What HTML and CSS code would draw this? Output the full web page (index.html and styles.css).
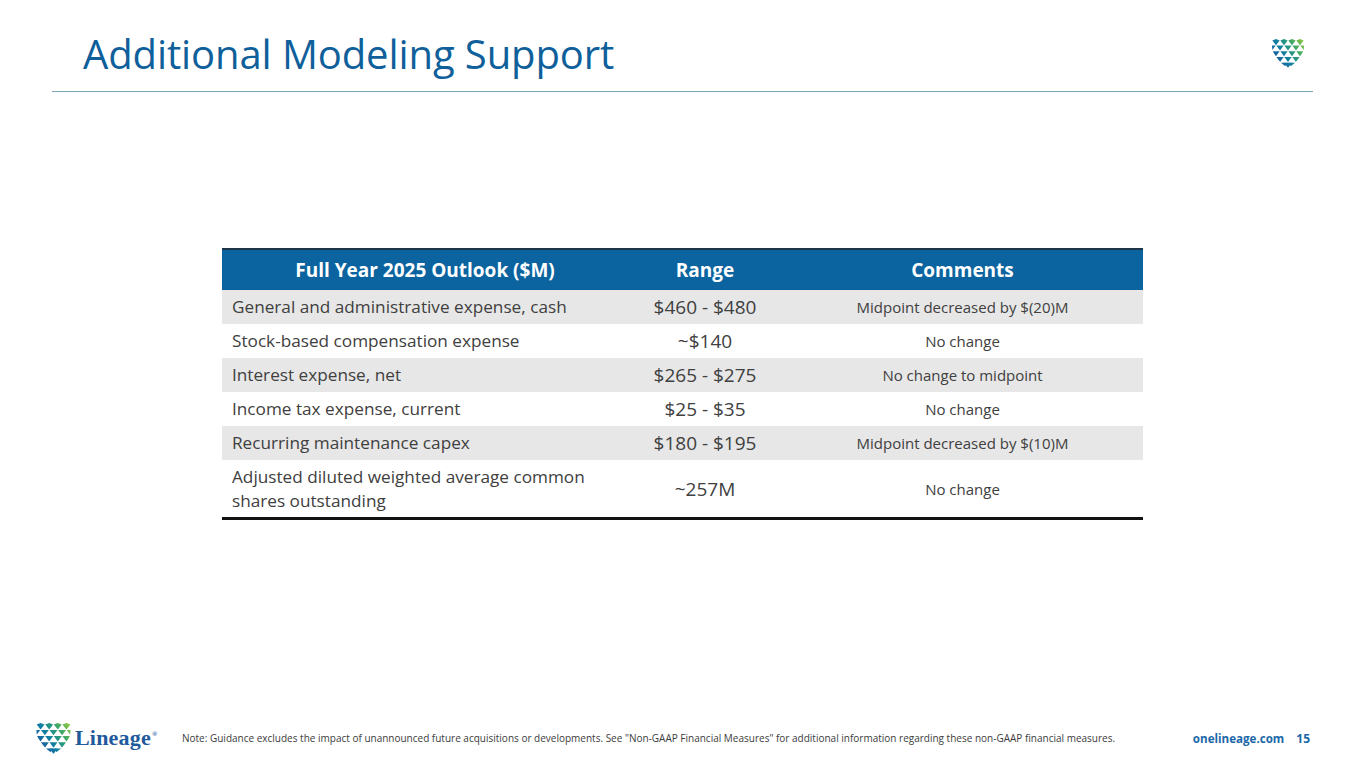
FILE: index.html
```html
<!DOCTYPE html>
<html>
<head>
<meta charset="utf-8">
<link rel="stylesheet" href="styles.css">
</head>
<body>
<svg class="defs" width="0" height="0" aria-hidden="true">
  <defs>
    <linearGradient id="lg" gradientUnits="userSpaceOnUse" x1="0" y1="30" x2="40" y2="4">
      <stop offset="0" stop-color="#1c4c9c"/>
      <stop offset="0.4" stop-color="#107ea3"/>
      <stop offset="0.68" stop-color="#30a171"/>
      <stop offset="1" stop-color="#8dc63f"/>
    </linearGradient>
    <clipPath id="shield">
      <path d="M0,0 L40,0 L40,9 C40,20 30,30 20,36 C10,30 0,20 0,9 Z"/>
    </clipPath>
    <symbol id="lineage-mark" viewBox="0 0 40 36">
      <g fill="url(#lg)" clip-path="url(#shield)">
        <polygon points="0.4,1.6 5,0 9.6,1.6 5,7.6"/>
        <polygon points="10.4,1.6 15,0 19.6,1.6 15,7.6"/>
        <polygon points="20.4,1.6 25,0 29.6,1.6 25,7.6"/>
        <polygon points="30.4,1.6 35,0 39.6,1.6 35,7.6"/>
        <polygon points="-4.6,8 4.6,8 0,14.2"/>
        <polygon points="5.4,8 14.6,8 10,14.2"/>
        <polygon points="15.4,8 24.6,8 20,14.2"/>
        <polygon points="25.4,8 34.6,8 30,14.2"/>
        <polygon points="35.4,8 44.6,8 40,14.2"/>
        <polygon points="0.4,15.2 9.6,15.2 5,21.4"/>
        <polygon points="10.4,15.2 19.6,15.2 15,21.4"/>
        <polygon points="20.4,15.2 29.6,15.2 25,21.4"/>
        <polygon points="30.4,15.2 39.6,15.2 35,21.4"/>
        <polygon points="-4.6,22.4 4.6,22.4 0,28.6"/>
        <polygon points="5.4,22.4 14.6,22.4 10,28.6"/>
        <polygon points="15.4,22.4 24.6,22.4 20,28.6"/>
        <polygon points="25.4,22.4 34.6,22.4 30,28.6"/>
        <polygon points="35.4,22.4 44.6,22.4 40,28.6"/>
        <polygon points="10.4,29.6 19.6,29.6 15,35.8"/>
        <polygon points="20.4,29.6 29.6,29.6 25,35.8"/>
        <polygon points="15.4,29.6 24.6,29.6 20,36"/>
      </g>
    </symbol>
  </defs>
</svg>
<div class="slide">
  <header class="top">
    <h1 class="title">Additional Modeling Support</h1>
    <svg class="mark mark-top" viewBox="0 0 40 36" aria-hidden="true"><use href="#lineage-mark"/></svg>
  </header>
  <div class="rule"></div>

  <main class="content">
    <div class="table">
      <div class="row head">
        <div class="cell c1">Full Year 2025 Outlook ($M)</div>
        <div class="cell c2">Range</div>
        <div class="cell c3">Comments</div>
      </div>
      <div class="row shade">
        <div class="cell c1">General and administrative expense, cash</div>
        <div class="cell c2">$460 - $480</div>
        <div class="cell c3">Midpoint decreased by $(20)M</div>
      </div>
      <div class="row">
        <div class="cell c1">Stock-based compensation expense</div>
        <div class="cell c2">~$140</div>
        <div class="cell c3">No change</div>
      </div>
      <div class="row shade">
        <div class="cell c1">Interest expense, net</div>
        <div class="cell c2">$265 - $275</div>
        <div class="cell c3">No change to midpoint</div>
      </div>
      <div class="row">
        <div class="cell c1">Income tax expense, current</div>
        <div class="cell c2">$25 - $35</div>
        <div class="cell c3">No change</div>
      </div>
      <div class="row shade">
        <div class="cell c1">Recurring maintenance capex</div>
        <div class="cell c2">$180 - $195</div>
        <div class="cell c3">Midpoint decreased by $(10)M</div>
      </div>
      <div class="row tall">
        <div class="cell c1">Adjusted diluted weighted average common shares outstanding</div>
        <div class="cell c2">~257M</div>
        <div class="cell c3">No change</div>
      </div>
    </div>
  </main>

  <footer class="foot">
    <div class="brand">
      <svg class="mark mark-foot" viewBox="0 0 40 36" aria-hidden="true"><use href="#lineage-mark"/></svg>
      <span class="wordmark">Lineage<sup>®</sup></span>
    </div>
    <p class="note">Note: Guidance excludes the impact of unannounced future acquisitions or developments. See "Non-GAAP Financial Measures" for additional information regarding these non-GAAP financial measures.</p>
    <span class="site">onelineage.com</span>
    <span class="page">15</span>
  </footer>
</div>
</body>
</html>
```

FILE: styles.css
```css
html, body {
  margin: 0;
  padding: 0;
  background: #ffffff;
}

.defs {
  position: absolute;
  width: 0;
  height: 0;
  overflow: hidden;
}

.slide {
  width: 1365px;
  height: 768px;
  display: flex;
  flex-direction: column;
  font-family: "Open Sans", "Liberation Sans", sans-serif;
  overflow: hidden;
}

.top {
  height: 86px;
  display: flex;
  align-items: flex-start;
  justify-content: space-between;
  padding: 0 61px 0 83px;
  box-sizing: border-box;
}

.title {
  margin: 29px 0 0 0;
  font-size: 40px;
  font-weight: 400;
  line-height: 50px;
  color: #0f5f9b;
  letter-spacing: -0.1px;
}

.mark {
  display: block;
}

.mark-top {
  width: 32px;
  height: 29px;
  margin-top: 39px;
}

.rule {
  margin: 5px 52px 0 52px;
  border-top: 1.5px solid #7ea6b6;
}

.content {
  height: 628px;
  display: flex;
  justify-content: center;
  align-items: flex-start;
  padding-top: 156px;
  box-sizing: border-box;
}

.table {
  width: 921px;
  border-top: 2px solid #1e3447;
  border-bottom: 3px solid #111111;
}

.row {
  display: grid;
  grid-template-columns: 406px 154px 361px;
  height: 34px;
  align-items: center;
  color: #404040;
}

.row.shade {
  background: #e7e7e7;
}

.row.head {
  height: 40px;
  background: #0b64a0;
  color: #ffffff;
  font-weight: 700;
}

.row.tall {
  height: 57px;
}

.cell {
  box-sizing: border-box;
  white-space: nowrap;
}

.c1 {
  padding-left: 10px;
  font-size: 17.2px;
  line-height: 24px;
  white-space: normal;
  padding-right: 20px;
}

.c2 {
  text-align: center;
  font-size: 19px;
}

.c3 {
  text-align: center;
  font-size: 15px;
}

.head .cell {
  font-size: 19px;
  text-align: center;
  padding: 0;
}

.foot {
  flex: 1;
  display: flex;
  align-items: center;
  padding: 0 55px 12px 36px;
  box-sizing: border-box;
}

.brand {
  display: flex;
  align-items: center;
  gap: 4px;
  width: 146px;
}

.mark-foot {
  width: 35px;
  height: 31px;
}

.wordmark {
  font-family: "Liberation Serif", "DejaVu Serif", serif;
  font-weight: 700;
  font-size: 22px;
  color: #1f5a9c;
  letter-spacing: 0.2px;
}

.wordmark sup {
  font-size: 7px;
  vertical-align: 9px;
  margin-left: 1px;
}

.note {
  margin: 0;
  flex: 1;
  font-size: 10px;
  color: #3c3c3c;
  white-space: nowrap;
}

.site {
  font-weight: 700;
  font-size: 11.6px;
  color: #1b68a8;
  margin-right: 12px;
}

.page {
  font-weight: 700;
  font-size: 12px;
  color: #1b68a8;
}
```
